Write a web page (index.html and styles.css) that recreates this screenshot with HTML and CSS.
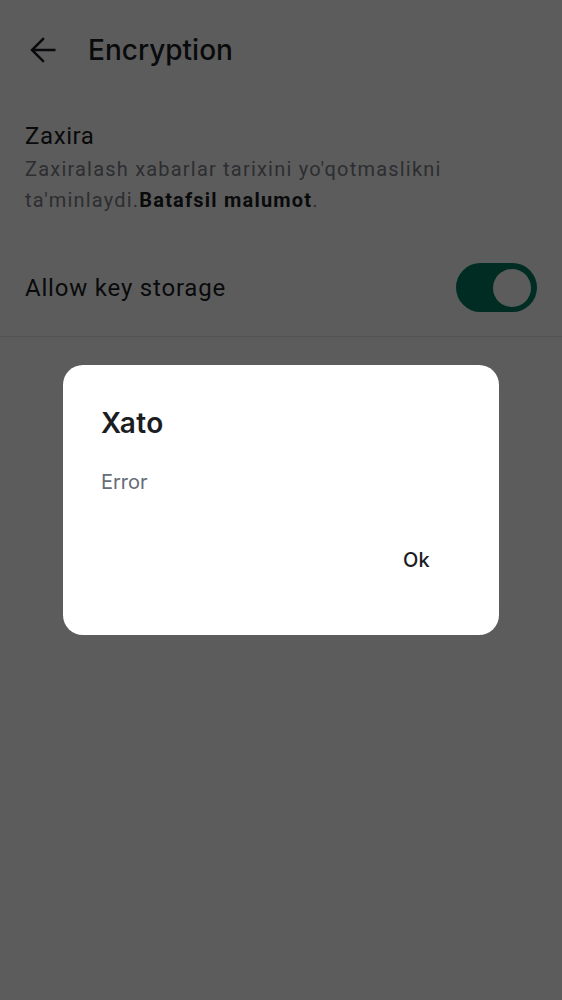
FILE: index.html
```html
<!DOCTYPE html>
<html>
<head>
<meta charset="utf-8">
<link rel="stylesheet" href="styles.css">
</head>
<body>
<div class="page">
  <header class="header">
    <svg class="back" width="30" height="30" viewBox="0 0 24 24"><path d="M21 12H3.6M12 3.2L3.2 12l8.8 8.8" fill="none" stroke="#1b1d22" stroke-width="2" stroke-linecap="square"/></svg>
    <h1 class="title">Encryption</h1>
  </header>
  <section class="section">
    <div class="sec-title">Zaxira</div>
    <div class="sec-desc">Zaxiralash xabarlar tarixini yo'qotmaslikni ta'minlaydi.<b class="link">Batafsil malumot</b>.</div>
  </section>
  <div class="row">
    <div class="row-label">Allow key storage</div>
    <div class="toggle"><div class="thumb"></div></div>
  </div>
</div>
<div class="scrim">
  <div class="dialog">
    <div class="dlg-title">Xato</div>
    <div class="dlg-body">Error</div>
    <div class="dlg-actions"><span class="dlg-btn">Ok</span></div>
  </div>
</div>
</body>
</html>
```
FILE: styles.css
```css
* { box-sizing: border-box; }
html, body { margin: 0; padding: 0; }
body { background: #ffffff; font-family: Roboto, "Noto Sans", sans-serif; color: #1b1d22; width: 562px; height: 1000px; overflow: hidden; }
.page { width: 562px; }
.header { height: 100px; display: flex; align-items: center; padding-left: 28px; }
.back { display: block; margin-right: 30px; }
.title { margin: 0; font-family: Inter, sans-serif; font-weight: 500; font-size: 28px; line-height: 36px; color: #1b1d22; }
.section { padding: 21px 25px 0 25px; }
.sec-title { font-size: 24px; line-height: 30px; letter-spacing: 0.6px; margin-bottom: 3px; }
.sec-desc { font-size: 20px; line-height: 31px; letter-spacing: 1.2px; color: #7c8088; }
.link { color: #1b1d22; font-weight: 700; letter-spacing: 1.2px; }
.row { margin-top: 23px; height: 98px; display: flex; align-items: center; justify-content: space-between; padding: 0 25px 0 25px; border-bottom: 1px solid #e3e5e8; }
.row-label { font-size: 24px; line-height: 30px; letter-spacing: 0.8px; }
.toggle { width: 81px; height: 49px; border-radius: 25px; background: #007a61; display: flex; align-items: center; justify-content: flex-end; padding-right: 6px; }
.thumb { width: 38px; height: 38px; border-radius: 50%; background: #ffffff; }
.scrim { position: fixed; inset: 0; background: rgba(0,0,0,0.64); display: flex; align-items: center; justify-content: center; }
.dialog { width: 436px; height: 270px; background: #ffffff; border-radius: 20px; padding: 40px 38px 0 38px; font-family: Inter, sans-serif; }
.dlg-title { font-size: 28px; line-height: 36px; font-weight: 600; letter-spacing: 0.3px; color: #1b1d22; }
.dlg-body { margin-top: 27px; font-size: 20px; line-height: 28px; color: #656d77; }
.dlg-actions { margin-top: 50px; display: flex; justify-content: flex-end; padding-right: 31px; }
.dlg-btn { font-size: 20px; line-height: 28px; font-weight: 500; letter-spacing: 0.3px; color: #1b1d22; }
```
